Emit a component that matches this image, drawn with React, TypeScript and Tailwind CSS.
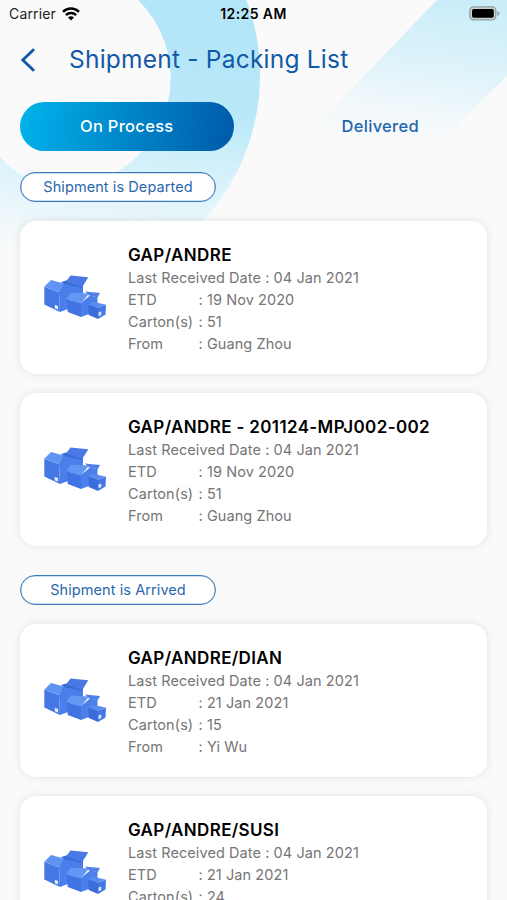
import React from 'react';

type Shipment = {
  name: string;
  received: string;
  etd: string;
  cartons: number;
  from: string;
};

const departed: Shipment[] = [
  { name: 'GAP/ANDRE', received: '04 Jan 2021', etd: '19 Nov 2020', cartons: 51, from: 'Guang Zhou' },
  { name: 'GAP/ANDRE - 201124-MPJ002-002', received: '04 Jan 2021', etd: '19 Nov 2020', cartons: 51, from: 'Guang Zhou' },
];

const arrived: Shipment[] = [
  { name: 'GAP/ANDRE/DIAN', received: '04 Jan 2021', etd: '21 Jan 2021', cartons: 15, from: 'Yi Wu' },
  { name: 'GAP/ANDRE/SUSI', received: '04 Jan 2021', etd: '21 Jan 2021', cartons: 24, from: 'Yi Wu' },
];

const Backdrop: React.FC = () => (
  <svg className="absolute inset-0" width="507" height="300" viewBox="0 0 507 300" fill="none">
    <defs>
      <linearGradient id="ring" x1="30" y1="0" x2="0" y2="250" gradientUnits="userSpaceOnUse">
        <stop offset="0" stopColor="#b3e6f8" />
        <stop offset="0.35" stopColor="#b9e8f8" />
        <stop offset="0.65" stopColor="#dbf3fb" />
        <stop offset="1" stopColor="#fafafa" />
      </linearGradient>
      <linearGradient id="band" x1="455" y1="0" x2="435" y2="150" gradientUnits="userSpaceOnUse">
        <stop offset="0" stopColor="#c9edf9" />
        <stop offset="0.45" stopColor="#def3fa" />
        <stop offset="0.75" stopColor="#f1f8fb" />
        <stop offset="1" stopColor="#fafafa" />
      </linearGradient>
    </defs>
    <circle cx="45" cy="75" r="215" fill="url(#ring)" />
    <path d="M0 0H138A109 109 0 0 1 120 170A90 90 0 0 1 0 157Z" fill="#fafafa" />
    <path d="M437 0H507V76L420 162L310 132Z" fill="url(#band)" />
  </svg>
);

const Boxes: React.FC = () => (
  <svg width="62" height="46" viewBox="0 0 62 46" className="-mt-0.5 shrink-0">
    {/* large box */}
    <path d="M15 17 19 8 39 11V21L24 26V34L16 37Z" fill="#4a7ee9" />
    <path d="M.3 11.700 15 17.300 16 37 .3 29.500Z" fill="#4578e5" />
    <path d="M17 7 24 5 39 10 38.500 13 20 9Z" fill="#3a6cd6" />
    <path d="M.3 11.700 7 5 20 8.500 15 17.300Z" fill="#6093f2" />
    <path d="M26.500.5 44.300 2.300 38.300 12 22 6.500Z" fill="#4a79e6" />
    <path d="M10.800 29.800 14 31V34.500L10.800 33.200Z" fill="#e2ebff" />
    {/* middle box */}
    <path d="M37 28 46 20.500 53.500 22V30L45 39 37 42Z" fill="#4b80ea" />
    <path d="M22.700 24 37 28V42L23.700 37Z" fill="#4174e2" />
    <path d="M22 24 27 17.500 45 18.500 37 28.500Z" fill="#6496f4" />
    <path d="M41 16.500 56 18 53.700 22.300 45 20.500Z" fill="#4f80ea" />
    {/* small box */}
    <path d="M44.300 29.500 54 32.500V44L44.700 40Z" fill="#3a6dd9" />
    <path d="M54 32.500 62 29.700 61.500 39.500 54 44Z" fill="#4478e5" />
    <path d="M44.300 29.500 49.300 26.700 62 29.700 54 32.500Z" fill="#5a8cf0" />
    <path d="M54.500 37.500 57.300 36.500V40L54.500 41.200Z" fill="#d8e5ff" />
  </svg>
);

const StatusBar: React.FC = () => (
  <div className="grid h-7 grid-cols-3 items-center px-[9px] text-sm tracking-[0.15px] text-black">
    <div className="flex items-center gap-1.5">
      <span className="text-[#222]">Carrier</span>
      <svg className="-mt-px" width="18" height="14" viewBox="0 0 18 14" fill="none" stroke="#000" strokeWidth="2.400">
        <path d="M1 4.800a11.500 11.500 0 0 1 16 0" />
        <path d="M3.900 8.100a7.300 7.300 0 0 1 10.200 0" />
        <path d="M9 13.500 6 10.600a4.300 4.300 0 0 1 6 0Z" fill="#000" stroke="none" />
      </svg>
    </div>
    <span className="text-center font-semibold tracking-[0.4px]">12:25 AM</span>
    <svg className="-mt-[2px] -mr-[2px] justify-self-end" width="31" height="15" viewBox="0 0 31 15">
      <rect x="0.800" y="0.800" width="26" height="13" rx="3.800" fill="#c4d3d2" stroke="#94a09f" strokeWidth="1.300" />
      <rect x="3" y="3" width="21.800" height="8.800" rx="1.800" fill="#000" />
      <path d="M28.300 5v5q2.200-1 2.200-2.500t-2.200-2.500Z" fill="#94a09f" />
    </svg>
  </div>
);

const GroupLabel: React.FC<{ text: string }> = ({ text }) => (
  <div className="flex h-[30px] w-[196px] items-center justify-center rounded-full border-[1.5px] border-[#3a7abd] bg-white text-[14.5px] tracking-[0.08px] text-[#2a68ad] ring-[0.5px] ring-[#3a7abd]/50 ring-inset">
    {text}
  </div>
);

const Row: React.FC<{ label: string; value: string | number }> = ({ label, value }) => (
  <div className="flex">
    <span className="w-[70.5px]">{label}</span>
    <span>: {value}</span>
  </div>
);

const ShipmentCard: React.FC<{ item: Shipment }> = ({ item }) => (
  <div className="flex h-[153px] items-center gap-[22px] rounded-2xl bg-white pt-[3px] pl-6 shadow-[0_0_8px_rgba(0,0,0,0.1)]">
    <Boxes />
    <div className="text-[14.5px] leading-[22px] tracking-[0.08px] text-[#757575]">
      <h2 className="text-[17px] leading-6 font-semibold tracking-[0.36px] text-black">{item.name}</h2>
      <p>Last Received Date : {item.received}</p>
      <Row label="ETD" value={item.etd} />
      <Row label="Carton(s)" value={item.cartons} />
      <Row label="From" value={item.from} />
    </div>
  </div>
);

const Group: React.FC<{ title: string; items: Shipment[] }> = ({ title, items }) => (
  <section>
    <GroupLabel text={title} />
    <div className="mt-[19px] space-y-[19px]">
      {items.map(item => (
        <ShipmentCard key={item.name} item={item} />
      ))}
    </div>
  </section>
);

const App: React.FC = () => {
  return (
    <div className="relative h-[900px] w-[507px] overflow-hidden bg-[#fafafa] font-['Inter',sans-serif]">
      <Backdrop />
      <div className="relative">
        <StatusBar />

        <header className="flex h-16 items-center pl-5 text-[#1259a8]">
          <svg width="17" height="24" viewBox="0 0 17 24" fill="none" stroke="#0d56a8" strokeWidth="2.800">
            <path d="M14 1.200 2.800 12 14 22.800" />
          </svg>
          <h1 className="ml-8 pb-px text-[24.5px] tracking-[0.22px]">Shipment - Packing List</h1>
        </header>

        {/* Tabs */}
        <div className="mt-[10px] grid grid-cols-2 gap-10 px-5 text-[16.5px] font-medium tracking-[0.3px]">
          <button className="h-[49px] rounded-full bg-linear-100 from-[#00b4eb] to-[#0059a9] pb-px text-white">On Process</button>
          <button className="h-[49px] pb-px text-[#1f66b0]">Delivered</button>
        </div>

        <main className="mt-[21px] space-y-[29px] px-5">
          <Group title="Shipment is Departed" items={departed} />
          <Group title="Shipment is Arrived" items={arrived} />
        </main>
      </div>
    </div>
  );
};

export default App;
